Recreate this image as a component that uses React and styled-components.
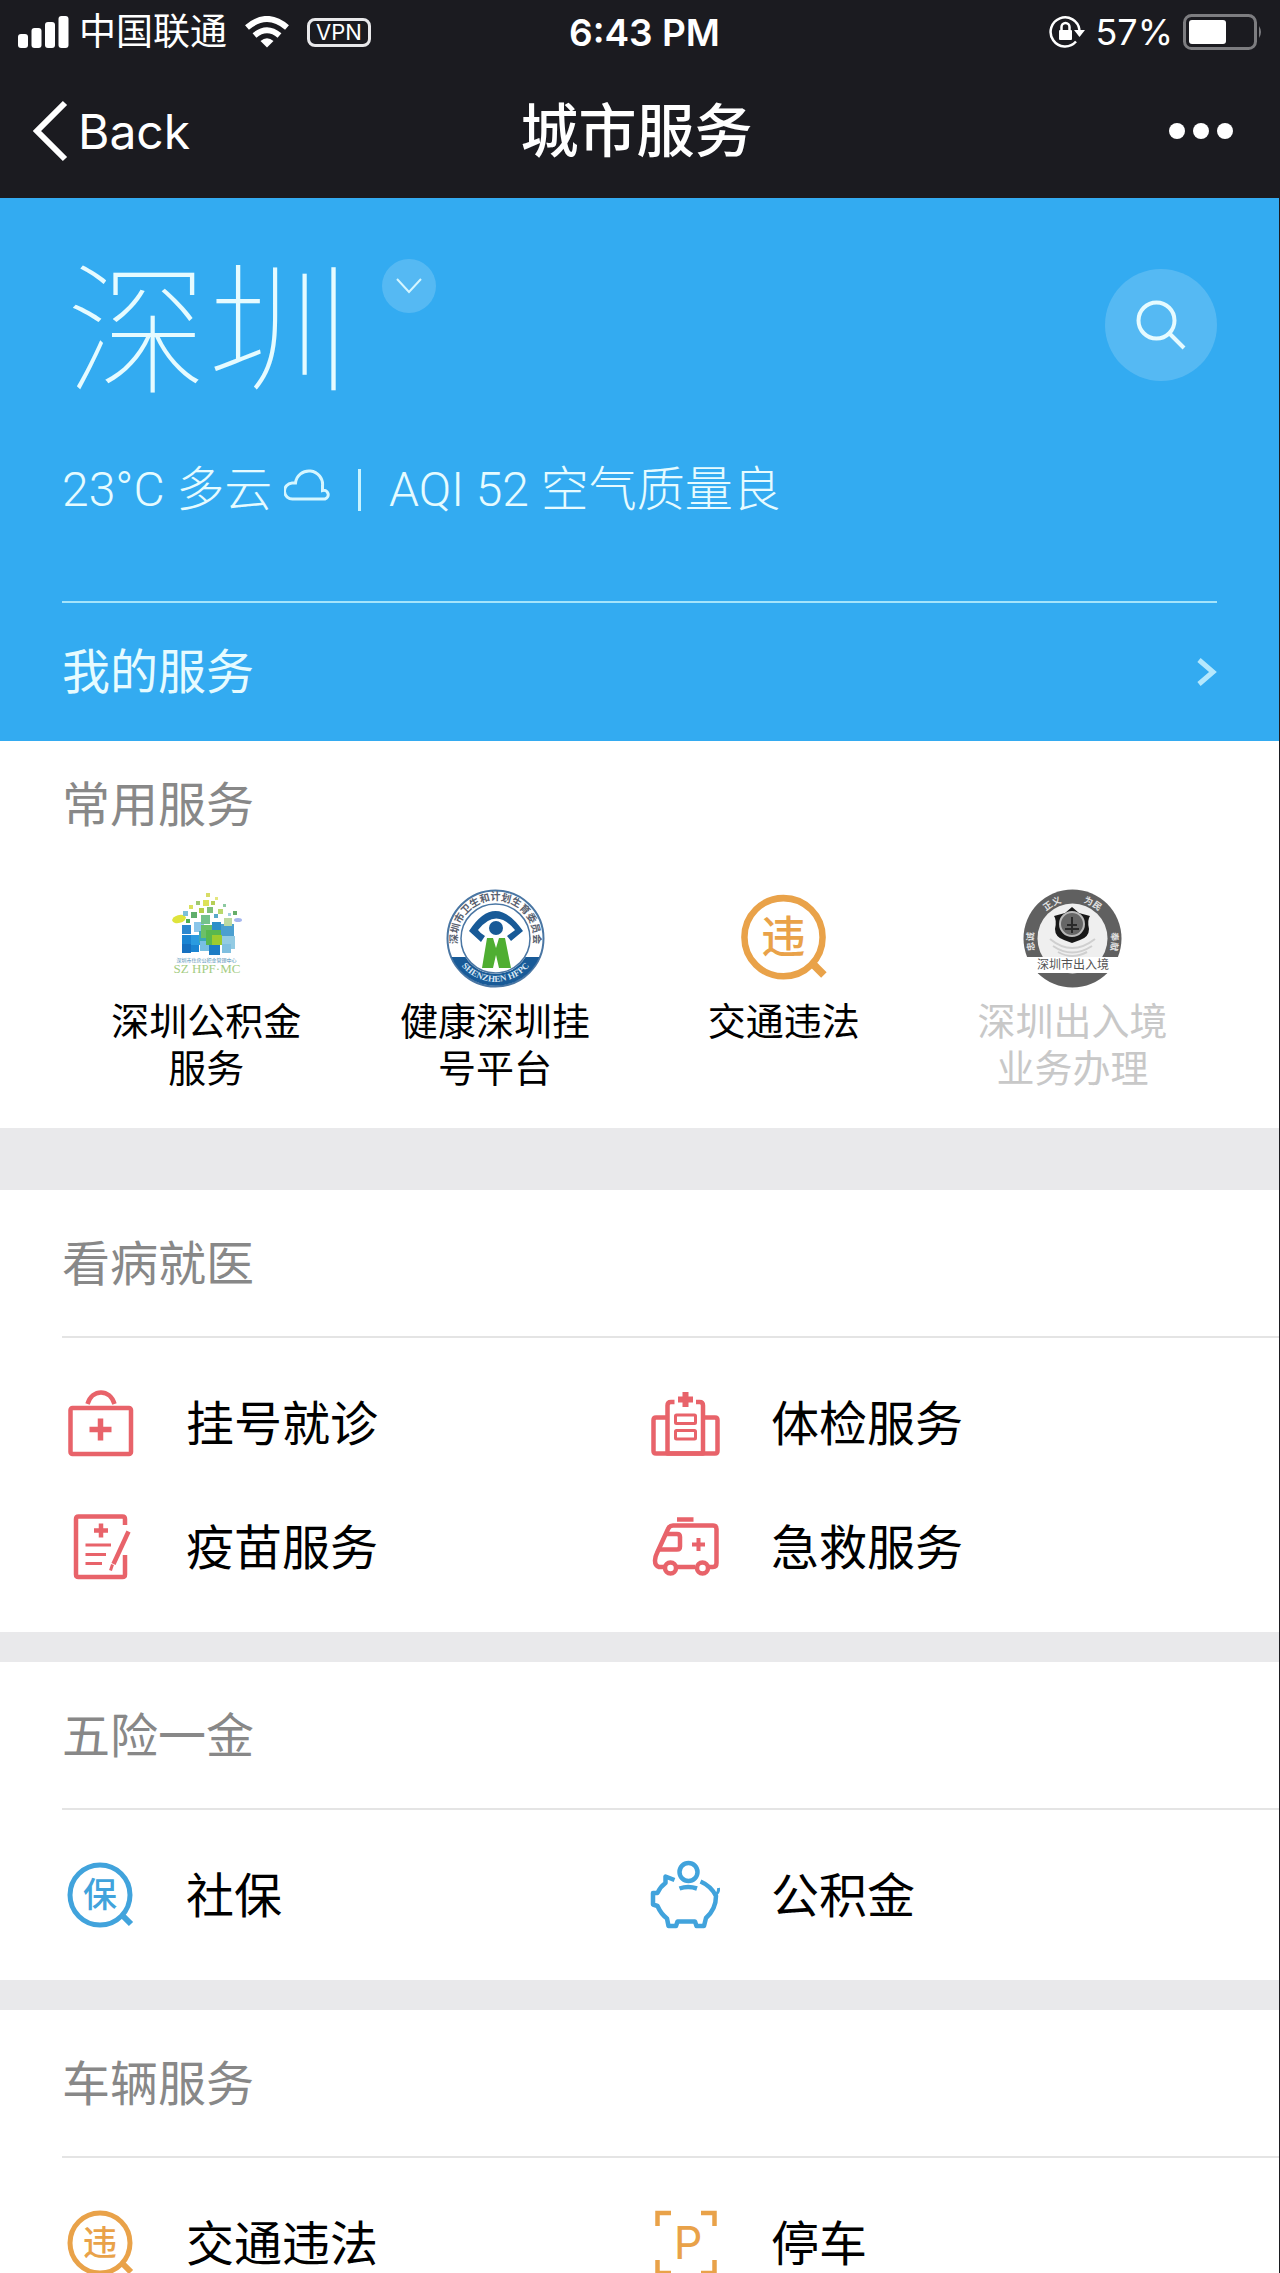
import React from 'react'
import styled, { createGlobalStyle } from 'styled-components'

const GlobalStyle = createGlobalStyle`
	* {
		box-sizing: border-box;
		margin: 0;
		padding: 0;
	}

	body {
		background: #e9e9eb;
		font-family: Inter, 'Noto Sans CJK SC', sans-serif;
		color: #000;
	}

	a {
		color: inherit;
		text-decoration: none;
	}

	button {
		border: 0;
		background: none;
		color: inherit;
		font: inherit;
		cursor: pointer;
	}

	svg {
		display: block;
		flex: none;
	}
`

const Page = styled.div`
	display: flex;
	flex-direction: column;
	height: 100vh;
	border-right: 1px solid #1b1b20;
`

const Header = styled.header`
	flex: none;
	background: #1b1b20;
	color: #fff;
`

const StatusBar = styled.div`
	display: grid;
	grid-template-columns: 1fr auto 1fr;
	align-items: center;
	height: 64px;
	padding: 0 16px 0 18px;
	font-size: 36px;
`

const StatusGroup = styled.div`
	display: flex;
	align-items: center;
	justify-content: ${props => (props.$end ? 'flex-end' : 'flex-start')};
	gap: ${props => (props.$end ? '10px' : '18px')};
`

const Carrier = styled.div`
	display: flex;
	align-items: center;
	gap: 10px;
	font-size: 37px;
	line-height: 48px;
`

const Vpn = styled.span`
	padding: 0 6px;
	border: 3px solid #e8e8ea;
	border-radius: 8px;
	font-size: 22px;
	line-height: 23px;
`

const Time = styled.p`
	padding-left: 8px;
	font-size: 37px;
	font-weight: 600;
`

const NavBar = styled.nav`
	display: grid;
	grid-template-columns: 1fr auto 1fr;
	align-items: center;
	height: 134px;
	padding: 0 38px 0 32px;
`

const BackButton = styled.button`
	display: flex;
	align-items: center;
	justify-self: start;
	gap: 8px;
	font-size: 48px;
`

const Title = styled.h1`
	font-size: 58px;
	font-weight: 500;
	line-height: 72px;
`

const MoreButton = styled.button`
	display: flex;
	justify-self: end;
	gap: 8px;
	padding: 8px;
`

const Dot = styled.span`
	width: 16px;
	height: 16px;
	border-radius: 50%;
	background: #fff;
`

const Content = styled.main`
	flex: 1;
	min-height: 0;
	overflow-y: auto;
	scrollbar-width: none;
`

const Hero = styled.section`
	padding: 56px 62px 0;
	background: #33abf1;
	color: #e6fbff;
`

const CityRow = styled.div`
	display: flex;
	align-items: flex-start;
	gap: 32px;
`

const City = styled.h2`
	padding-left: 4px;
	font-size: 142px;
	font-weight: 100;
	line-height: 152px;
`

const RoundButton = styled.button`
	display: flex;
	align-items: center;
	justify-content: center;
	width: ${props => props.$size}px;
	height: ${props => props.$size}px;
	margin-top: ${props => (props.$end ? '15px' : '5px')};
	margin-left: ${props => (props.$end ? 'auto' : '0')};
	border-radius: 50%;
	background: rgba(255, 255, 255, 0.17);
`

const Weather = styled.div`
	display: flex;
	align-items: center;
	height: 197px;
	padding-bottom: 28px;
	border-bottom: 2px solid #a5e4fb;
	font-family: Roboto, 'Noto Sans CJK SC', sans-serif;
	font-size: 48px;
	font-weight: 300;
	line-height: 64px;
`

const Bar = styled.span`
	width: 3px;
	height: 42px;
	margin: 0 28px;
	background: #c9f3ff;
`

const MyServices = styled.a`
	display: flex;
	align-items: center;
	justify-content: space-between;
	height: 138px;
	font-size: 48px;
	line-height: 64px;
`

const Common = styled.section`
	min-height: 387px;
	padding: 32px 62px 36px;
	background: #fff;
`

const Heading = styled.h3`
	color: #888;
	font-size: 48px;
	font-weight: 400;
	line-height: 64px;
`

const CommonGrid = styled.div`
	display: grid;
	grid-template-columns: repeat(4, 1fr);
	justify-items: center;
	padding-top: 52px;
`

const CommonItem = styled.a`
	display: flex;
	flex-direction: column;
	align-items: center;
	gap: 10px;
	width: 192px;
	color: ${props => (props.$muted ? '#c8c8c8' : '#000')};
	font-size: 38px;
	line-height: 47px;
	text-align: center;
`

const Group = styled.section`
	margin-top: ${props => (props.$first ? '62px' : '30px')};
	padding-left: 62px;
	background: #fff;
`

const GroupHead = styled.div`
	padding: 42px 0 40px;
	border-bottom: 2px solid #e4e4e4;
`

const GroupGrid = styled.div`
	display: grid;
	grid-template-columns: 1fr 1fr;
	padding: 24px 47px 22px 0;
`

const GroupItem = styled.a`
	display: flex;
	align-items: center;
	gap: 48px;
	height: 124px;
	font-size: 48px;
	line-height: 64px;
`

const RED = '#e8636a'
const BLUE = '#41a3dc'
const ORANGE = '#e9a249'

const Plus = ({ x, y, r, w }) => (
	<path d={`M${x - r} ${y}h${r * 2}M${x} ${y - r}v${r * 2}`} strokeWidth={w} />
)

const Icon = ({ color, children }) => (
	<svg
		width='76'
		height='76'
		viewBox='0 0 76 76'
		fill='none'
		stroke={color}
		strokeWidth='4.500'
		strokeLinejoin='round'
		aria-hidden='true'
	>
		{children}
	</svg>
)

const MedKit = () => (
	<Icon color={RED}>
		<rect x='8.5' y='22' width='60.5' height='46' rx='2' />
		<path d='M25.500 18C30 2.500 48 2.500 52.500 18' />
		<Plus x={38.5} y={43.5} r={11} w={5.5} />
	</Icon>
)

const Hospital = () => (
	<Icon color={RED}>
		<path d='M27.500 16H24q-3.500 0-3.500 3.500V67.500h35.500V19.500q0-3.500-3.500-3.500H49' />
		<path d='M20.500 31.500H9q-2.500 0-2.500 2.500V65q0 2.500 2.500 2.500H68q2.500 0 2.500-2.500V34q0-2.500-2.500-2.500H56' />
		<rect x='28.5' y='29' width='20' height='8.500' rx='1' strokeWidth='3' />
		<rect x='28.5' y='44.500' width='20' height='8.500' rx='1' strokeWidth='3' />
		<Plus x={38.5} y={13.5} r={7.5} w={6} />
	</Icon>
)

const Vaccine = () => (
	<Icon color={RED}>
		<path d='M63 15V9q0-2.500-2.500-2.500H16.500Q14 6.500 14 9V64.500q0 2.500 2.500 2.500H60.500q2.500 0 2.500-2.500V45' />
		<Plus x={39} y={20.5} r={7} w={4.5} />
		<path d='M23.500 35H49M23.500 44.500H44M23.500 53.500H40' strokeWidth='3' />
		<path d='M66.500 21.500L51.500 54' strokeWidth='4.500' />
		<path d='M50.500 54.500L48.500 60.500' strokeWidth='3' />
	</Icon>
)

const Ambulance = () => (
	<Icon color={RED}>
		<path d='M30 9.500H46.500' />
		<path d='M17 57H12Q8 56 8 50.500Q8 47 10 43L21 19Q22.500 15.500 26 15.500H66Q69.500 15.500 69.500 19V53Q69.500 57 66 57H62M30 57H48' />
		<path d='M19 24H30Q33 24 33 27V36.500Q33 39.500 30 39.500H13' />
		<circle cx='23.5' cy='58' r='5.500' />
		<circle cx='55.5' cy='58' r='5.500' />
		<Plus x={51.5} y={34.5} r={6.5} w={4} />
	</Icon>
)

const Lens = ({ color, label, size = 76 }) => (
	<svg width={size} height={size} viewBox='0 0 76 76' aria-hidden='true'>
		<circle cx='38' cy='37' r='30' fill='none' stroke={color} strokeWidth='5' />
		<path d='M60 57L69 66' stroke={color} strokeWidth='6' />
		<text
			x='38'
			y='49'
			fill={color}
			fontSize='34'
			fontWeight='500'
			textAnchor='middle'
			fontFamily='Noto Sans CJK SC'
		>
			{label}
		</text>
	</svg>
)

const Piggy = () => (
	<Icon color={BLUE}>
		<circle cx='41.500' cy='14' r='9' />
		<path d='M32.500 30.500Q41 27.500 50 30.500' />
		<path d='M27.500 22L18.500 18.500V25Q13 29 10.500 35H6V46.500L10.500 48Q14 56 20 60.500L21.500 68H29L30.500 63.500H48L49.500 68H57L59 60Q69 51 69 38Q64 28 53.500 23.500' />
		<path d='M68 37Q72 35 71.500 30' strokeWidth='3' />
	</Icon>
)

const Parking = () => (
	<Icon color={ORANGE}>
		<path d='M10.500 20V7H24M54 7H67.500V20M67.500 54V67H54M24 67H10.500V54' strokeLinejoin='miter' />
		<text
			x='41'
			y='53'
			fill={ORANGE}
			stroke='none'
			fontSize='45'
			textAnchor='middle'
			fontFamily='Inter'
		>
			P
		</text>
	</Icon>
)

// x, y, size, colour of each tile of the house
const TILES = [
	[25, 36, 9, '#2b87cf'],
	[25, 46, 17, '#1a84d2'],
	[34, 46, 10, '#2a9be0'],
	[25, 55, 9, '#1670c0'],
	[37, 33, 10, '#8ac6ea'],
	[42, 42, 12, '#3ba7b8'],
	[43, 52, 10, '#78bfe2'],
	[44, 26, 9, '#74c28b'],
	[44, 36, 13, '#6cc068'],
	[55, 33, 9, '#2d8fca'],
	[64, 35, 13, '#4b9fd0'],
	[65, 47, 13, '#93cbe3'],
	[65, 55, 9, '#7fbfe0'],
	[52, 55, 11, '#1c7cc4'],
	[49, 41, 15, '#58b84e'],
	[55, 46, 10, '#9dcb2e'],
	[67, 29, 8, '#bcd9a0'],
	[26, 22, 5, '#7cc0d8'],
	[34, 23, 6, '#5fae6b'],
	[29, 30, 4, '#4fae52'],
	[42, 19, 5, '#b5cf49'],
	[50, 18, 6, '#7fbf7a'],
	[57, 25, 4, '#58a9c9'],
	[61, 20, 5, '#b9d86d'],
	[66, 15, 3, '#8cc9a0'],
	[32, 16, 4, '#d9e05c'],
	[39, 12, 4, '#9fca70'],
	[46, 11, 6, '#dde25a'],
	[54, 12, 4, '#b7cf57'],
	[49, 4, 4, '#d8dc66'],
	[58, 8, 3, '#e4e67e'],
	[76, 22, 4, '#66ad6a'],
	[71, 24, 3, '#a2cfe2'],
]

const HousingLogo = () => (
	<svg width='99' height='99' viewBox='0 0 99 99' aria-hidden='true'>
		<ellipse cx='22' cy='30' rx='7' ry='4' fill='#dfe43c' transform='rotate(-15 22 30)' />
		<ellipse cx='81' cy='31' rx='4' ry='2' fill='#a5b6ee' />
		{TILES.map(([x, y, s, fill]) => (
			<rect key={`${x}-${y}`} x={x} y={y} width={s} height={s} fill={fill} />
		))}
		<text x='49.500' y='73' fill='#4b8db5' fontSize='5' textAnchor='middle' fontFamily='Noto Sans CJK SC'>
			深圳市住房公积金管理中心
		</text>
		<text x='50' y='84' fill='#a4cc82' fontSize='13' textAnchor='middle' fontFamily='Liberation Serif'>
			SZ HPF·MC
		</text>
	</svg>
)

const HealthLogo = () => (
	<svg width='99' height='99' viewBox='0 0 99 99' aria-hidden='true'>
		<defs>
			<path id='health-top' d='M13.800 62.500A38 38 0 1 1 85.200 62.500' />
			<path id='health-bottom' d='M9 66A44 44 0 0 0 90 66' />
		</defs>
		<circle cx='49.500' cy='49.500' r='48' fill='#fff' stroke='#4a76a3' strokeWidth='2' />
		<path d='M5.500 68A48 48 0 0 0 93.500 68L79.500 68A35 35 0 0 1 19.500 68Z' fill='#185a97' />
		<circle cx='49.500' cy='49.500' r='34.500' fill='#fff' stroke='#4a76a3' strokeWidth='1.500' />
		<text fill='#58606e' fontSize='10' fontWeight='700' textAnchor='middle' fontFamily='Noto Sans CJK SC'>
			<textPath href='#health-top' startOffset='50%'>
				深圳市卫生和计划生育委员会
			</textPath>
		</text>
		<text fill='#d8e8f5' fontSize='9' fontWeight='700' textAnchor='middle' fontFamily='Liberation Serif'>
			<textPath href='#health-bottom' startOffset='50%'>
				SHENZHEN HFPC
			</textPath>
		</text>
		<path d='M23 42Q49 2 77 42L65 52L61 47Q68 42 69 41Q50 18 32 41Q34 44 39 47L35 53Z' fill='#185a97' />
		<circle cx='50' cy='39' r='7' fill='#185a97' />
		<path d='M41 49H47L50 59L53 49H59L65 79H53L50 66L47 79H36Z' fill='#4fae32' />
	</svg>
)

const PoliceLogo = () => (
	<svg width='99' height='99' viewBox='0 0 99 99' aria-hidden='true'>
		<defs>
			<path id='police-ring' d='M13.500 66A39 39 0 1 1 85.500 66' />
		</defs>
		<circle cx='49.500' cy='49.500' r='49' fill='#606060' />
		<circle cx='49.500' cy='49.500' r='35' fill='#efefef' />
		<path
			d='M27 50Q49 68 72 50M30 57Q49 70 69 57M35 63Q49 71 64 63'
			fill='none'
			stroke='#cfcfcf'
			strokeWidth='2'
		/>
		<path d='M49 18L56 24L67 27Q64 31 66 40Q66 48 57 51L49 54L41 51Q32 48 32 40Q34 31 31 27L42 24Z' fill='#181818' />
		<circle cx='49' cy='35' r='12' fill='#666' stroke='#b9b9b9' strokeWidth='2' />
		<path d='M42 40H56M44 36H54M49 28V44' stroke='#2a2a2a' strokeWidth='2' />
		<g fill='#e2e2e2' fontSize='9' fontWeight='700' textAnchor='middle' fontFamily='Noto Sans CJK SC'>
			<text>
				<textPath href='#police-ring' startOffset='9%'>忠诚</textPath>
			</text>
			<text>
				<textPath href='#police-ring' startOffset='37%'>正义</textPath>
			</text>
			<text>
				<textPath href='#police-ring' startOffset='63%'>为民</textPath>
			</text>
			<text>
				<textPath href='#police-ring' startOffset='91%'>奉献</textPath>
			</text>
		</g>
		<path d='M0 68H99V84H0Z' fill='#fff' />
		<text x='50' y='80' fill='#555' fontSize='12' textAnchor='middle' fontFamily='Noto Sans CJK SC'>
			深圳市出入境
		</text>
	</svg>
)

const SignalIcon = () => (
	<svg width='51' height='34' viewBox='0 0 51 34' fill='#fff' aria-hidden='true'>
		<rect x='0' y='19' width='10' height='14' rx='3' />
		<rect x='13.500' y='13' width='10' height='20' rx='3' />
		<rect x='27' y='7' width='10' height='26' rx='3' />
		<rect x='40.500' y='1' width='10' height='32' rx='3' />
	</svg>
)

const WifiIcon = () => (
	<svg width='44' height='32' viewBox='0 0 44 32' fill='none' stroke='#fff' strokeWidth='6' aria-hidden='true'>
		<path d='M2 11.500Q22-5.500 42 11.500' />
		<path d='M9.500 19.500Q22 9 34.500 19.500' />
		<path d='M22 31.500L15.500 25Q22 19.500 28.500 25Z' fill='#fff' stroke='none' />
	</svg>
)

const LockIcon = () => (
	<svg width='36' height='34' viewBox='0 0 36 34' fill='none' stroke='#fff' strokeWidth='2.500' aria-hidden='true'>
		<path d='M30.500 15A14.500 14.500 0 1 0 27 26.500' />
		<path d='M25 15H36L30.500 22Z' fill='#fff' stroke='none' />
		<rect x='10' y='15' width='13' height='10' rx='1' fill='#fff' stroke='none' />
		<path d='M12.500 15V12a4 4 0 0 1 8 0V15' />
	</svg>
)

const BatteryIcon = () => (
	<svg width='80' height='36' viewBox='0 0 80 36' aria-hidden='true'>
		<rect x='1.500' y='1.500' width='71' height='33' rx='7' fill='none' stroke='#7d7d80' strokeWidth='3' />
		<rect x='6' y='6' width='37' height='24' rx='3' fill='#fff' />
		<path d='M76 12Q80 18 76 24Z' fill='#7d7d80' />
	</svg>
)

const common = [
	{ name: '深圳公积金服务', icon: <HousingLogo /> },
	{ name: '健康深圳挂号平台', icon: <HealthLogo /> },
	{ name: '交通违法', icon: <Lens color={ORANGE} label='违' size={99} /> },
	{ name: '深圳出入境业务办理', icon: <PoliceLogo />, muted: true },
]

const groups = [
	{
		title: '看病就医',
		items: [
			{ name: '挂号就诊', icon: <MedKit /> },
			{ name: '体检服务', icon: <Hospital /> },
			{ name: '疫苗服务', icon: <Vaccine /> },
			{ name: '急救服务', icon: <Ambulance /> },
		],
	},
	{
		title: '五险一金',
		items: [
			{ name: '社保', icon: <Lens color={BLUE} label='保' /> },
			{ name: '公积金', icon: <Piggy /> },
		],
	},
	{
		title: '车辆服务',
		items: [
			{ name: '交通违法', icon: <Lens color={ORANGE} label='违' /> },
			{ name: '停车', icon: <Parking /> },
		],
	},
]

const App = () => {
	return (
		<>
			<GlobalStyle />
			<Page>
				<Header>
					<StatusBar>
						<StatusGroup>
							<Carrier>
								<SignalIcon />
								<span>中国联通</span>
							</Carrier>
							<WifiIcon />
							<Vpn>VPN</Vpn>
						</StatusGroup>
						<Time>6:43 PM</Time>
						<StatusGroup $end>
							<LockIcon />
							<span>57%</span>
							<BatteryIcon />
						</StatusGroup>
					</StatusBar>
					<NavBar>
						<BackButton>
							<svg width='38' height='62' viewBox='0 0 38 62' fill='none' stroke='#fff' strokeWidth='6' aria-hidden='true'>
								<path d='M33 3L5 31L33 59' />
							</svg>
							Back
						</BackButton>
						<Title>城市服务</Title>
						<MoreButton aria-label='更多'>
							<Dot />
							<Dot />
							<Dot />
						</MoreButton>
					</NavBar>
				</Header>
				<Content>
					<Hero>
						<CityRow>
							<City>深圳</City>
							<RoundButton $size={54} aria-label='切换城市'>
								<svg width='28' height='16' viewBox='0 0 28 16' fill='none' stroke='#d5f6ff' strokeWidth='2' aria-hidden='true'>
									<path d='M2 1L14 14L26 1' />
								</svg>
							</RoundButton>
							<RoundButton $size={112} $end aria-label='搜索'>
								<svg width='50' height='50' viewBox='0 0 50 50' fill='none' stroke='#e6fbff' strokeWidth='4' aria-hidden='true'>
									<circle cx='20.500' cy='20.500' r='18' />
									<path d='M33.500 33.500L48 48' />
								</svg>
							</RoundButton>
						</CityRow>
						<Weather>
							<span>23°C 多云&nbsp;</span>
							<svg width='46' height='42' viewBox='0 0 46 42' fill='none' stroke='#d5f6ff' strokeWidth='3' aria-hidden='true'>
								<path d='M9 30A7 7 0 0 1 8 14H11.500A13.500 13.500 0 0 1 38.500 17V21.500A4 4 0 0 1 41 30Z' />
							</svg>
							<Bar />
							<span>AQI 52 空气质量良</span>
						</Weather>
						<MyServices href='#mine'>
							我的服务
							<svg width='20' height='28' viewBox='0 0 20 28' fill='none' stroke='#b5e8fd' strokeWidth='5' aria-hidden='true'>
								<path d='M2 2L16 14L2 26' />
							</svg>
						</MyServices>
					</Hero>
					<Common>
						<Heading>常用服务</Heading>
						<CommonGrid>
							{common.map(item => (
								<CommonItem key={item.name} href='#service' $muted={item.muted}>
									{item.icon}
									{item.name}
								</CommonItem>
							))}
						</CommonGrid>
					</Common>
					{groups.map((group, index) => (
						<Group key={group.title} $first={index === 0}>
							<GroupHead>
								<Heading>{group.title}</Heading>
							</GroupHead>
							<GroupGrid>
								{group.items.map(item => (
									<GroupItem key={item.name} href='#service'>
										{item.icon}
										{item.name}
									</GroupItem>
								))}
							</GroupGrid>
						</Group>
					))}
				</Content>
			</Page>
		</>
	)
}

export default App
